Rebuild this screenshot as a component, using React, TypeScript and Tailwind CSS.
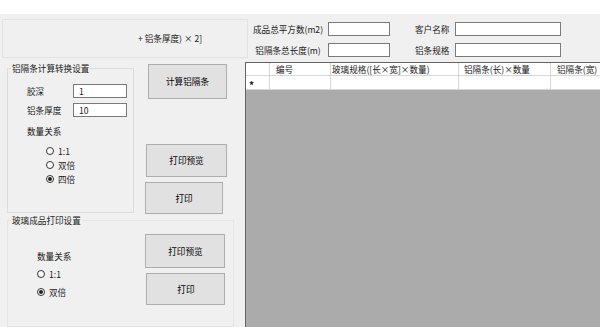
import React from "react";

const F = { fontFamily: '"Noto Sans CJK SC", "Liberation Sans", sans-serif' };

function Radio({ checked, label }: { checked?: boolean; label: string }) {
  return (
    <div className="flex items-center h-[14px]">
      <span className="w-[8px] h-[8px] rounded-full border border-[#333] bg-white flex items-center justify-center">
        {checked && <span className="w-[4px] h-[4px] rounded-full bg-[#222]" />}
      </span>
      <span className="ml-[4px] leading-none">{label}</span>
    </div>
  );
}

function Btn({ label, cls }: { label: string; cls: string }) {
  return (
    <div className={"flex items-center justify-center bg-[#e1e1e1] border border-[#adadad] text-[#000] " + cls}>
      {label}
    </div>
  );
}

function Input({ cls, value }: { cls: string; value?: string }) {
  return (
    <div className={"bg-white border border-[#7a7a7a] flex items-center pl-[5px] leading-none " + cls}>
      {value}
    </div>
  );
}

export default function App() {
  const cols = [
    { w: "w-[61px]", pl: "pl-[6px]", t: "编号" },
    { w: "w-[128px]", pl: "pl-[1px]", t: "玻璃规格([长×宽]×数量)" },
    { w: "w-[92px]", pl: "pl-[5px]", t: "铝隔条(长)×数量" },
    { w: "w-[80px]", pl: "pl-[6px]", t: "铝隔条(宽)" },
  ];
  return (
    <div
      className="w-[600px] h-[327px] overflow-hidden bg-[#f0f0f0] text-[8.6px] text-[#1a1a1a] flex flex-col"
      style={F}
    >
      <div className="h-[14px] bg-white shrink-0" />
      {/* Row 1 */}
      <div className="h-[48px] flex shrink-0">
        <div className="ml-[2px] mt-[5px] w-[246px] h-[39px] border border-[#e2e2e2] flex items-center pl-[135px]">
          + 铝条厚度) × 2]
        </div>
        <div className="flex flex-col pt-[8px] gap-[7px]">
          <div className="flex items-center">
            <div className="w-[80px] text-center">成品总平方数(m2)</div>
            <Input cls="w-[62px] h-[14px]" />
            <div className="ml-[25px] w-[40px]">客户名称</div>
            <Input cls="w-[106px] h-[14px] -mt-[1px]" />
          </div>
          <div className="flex items-center">
            <div className="w-[80px] text-center">铝隔条总长度(m)</div>
            <Input cls="w-[62px] h-[14px]" />
            <div className="ml-[25px] w-[40px]">铝条规格</div>
            <Input cls="w-[106px] h-[14px] -mt-[1px]" />
          </div>
        </div>
      </div>
      {/* Row 2 */}
      <div className="flex flex-1 min-h-0">
        <div className="w-[245px] shrink-0 flex flex-col">
          <div className="flex h-[156px]">
            <fieldset className="ml-[7px] w-[127px] h-[151px] border border-[#dcdcdc] m-0 p-0">
              <legend className="ml-[3px] px-[1px] leading-[12px]">铝隔条计算转换设置</legend>
              <div className="flex flex-col pl-[19px] pt-[10px]">
                <div className="flex items-center">
                  <div className="w-[46px]">胶深</div>
                  <Input cls="w-[54px] h-[14px]" value="1" />
                </div>
                <div className="flex items-center mt-[5px]">
                  <div className="w-[46px]">铝条厚度</div>
                  <Input cls="w-[54px] h-[14px]" value="10" />
                </div>
                <div className="mt-[8px] leading-[12px]">数量关系</div>
                <div className="ml-[19px] mt-[7px] flex flex-col">
                  <Radio label="1:1" />
                  <Radio label="双倍" />
                  <Radio checked label="四倍" />
                </div>
              </div>
            </fieldset>
            <div className="flex flex-col ml-[11px]">
              <Btn label="计算铝隔条" cls="mt-[2px] ml-[3px] w-[79px] h-[35px]" />
              <Btn label="打印预览" cls="mt-[45px] ml-[1px] w-[81px] h-[33px]" />
              <Btn label="打印" cls="mt-[5px] w-[78px] h-[32px]" />
            </div>
          </div>
          <fieldset className="ml-[7px] w-[227px] h-[130px] border border-[#e4e4e4] m-0 p-0">
            <legend className="ml-[3px] px-[1px] leading-[12px]">玻璃成品打印设置</legend>
            <div className="flex">
              <div className="flex flex-col pl-[29px] pt-[24px]">
                <div className="leading-[12px]">数量关系</div>
                <div className="mt-[5px] flex flex-col gap-[4px]">
                  <Radio label="1:1" />
                  <Radio checked label="双倍" />
                </div>
              </div>
              <div className="flex flex-col ml-[74px] pt-[8px]">
                <Btn label="打印预览" cls="w-[80px] h-[34px]" />
                <Btn label="打印" cls="mt-[5px] ml-[1px] w-[79px] h-[32px]" />
              </div>
            </div>
          </fieldset>
        </div>
        {/* Grid */}
        <div className="flex-1 bg-[#ababab] border-l border-t border-[#646464] flex flex-col">
          <div className="flex h-[13px] bg-white border-b border-[#d6d6d6]">
            <div className="w-[24px] border-r border-[#d6d6d6] shrink-0" />
            {cols.map((c) => (
              <div key={c.t} className={"shrink-0 border-r border-[#d6d6d6] flex items-center whitespace-nowrap overflow-hidden " + c.w + " " + c.pl}>
                {c.t}
              </div>
            ))}
          </div>
          <div className="flex h-[14px] bg-white border-b border-[#d6d6d6]">
            <div className="w-[24px] border-r border-[#d6d6d6] shrink-0 flex items-center pl-[3px] pt-[4px] text-[10px] font-bold leading-none">*</div>
            {cols.map((c) => (
              <div key={c.t} className={"shrink-0 border-r border-[#d6d6d6] " + c.w} />
            ))}
          </div>
        </div>
      </div>
    </div>
  );
}
